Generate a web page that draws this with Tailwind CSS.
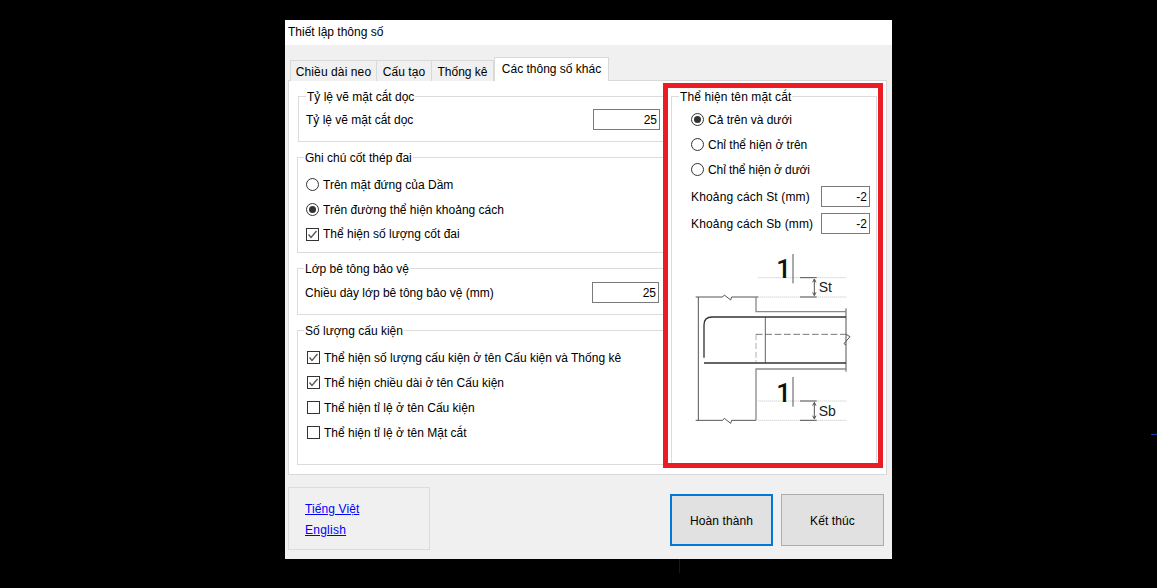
<!DOCTYPE html>
<html lang="vi">
<head>
<meta charset="utf-8">
<title>Thiết lập thông số</title>
<script src="https://cdn.jsdelivr.net/npm/@tailwindcss/browser@4"></script>
</head>
<body class="bg-black">
<div class="relative h-[588px] w-[1157px] overflow-hidden pt-[20px] pl-[285px] font-['Liberation_Sans',Arial,sans-serif] text-[12px] text-black">
  <div class="absolute left-[1151px] top-[434px] h-px w-[6px] bg-[#1a3fb0]"></div>
  <div class="absolute left-[679px] top-[559px] h-[14px] w-px bg-[#3a0a12]"></div>

  <div class="flex h-[539px] w-[607px] flex-col bg-[#f0f0f0]">
    <div class="flex h-[25px] items-center bg-white pl-[3px] pb-[2px]">Thiết lập thông số</div>

    <div class="relative z-10 -mb-px flex h-[36px] items-end pl-[5px]">
      <div class="flex h-[21px] w-[87px] items-center justify-center border border-b-0 border-[#d9d9d9] bg-[#f0f0f0] pt-[1px] tracking-[0.1px]">Chiều dài neo</div>
      <div class="flex h-[21px] w-[55px] items-center justify-center border border-b-0 border-l-0 border-[#d9d9d9] bg-[#f0f0f0] pt-[1px] tracking-[0.1px]">Cấu tạo</div>
      <div class="flex h-[21px] w-[62px] items-center justify-center border border-b-0 border-l-0 border-[#d9d9d9] bg-[#f0f0f0] pt-[1px]">Thống kê</div>
      <div class="flex h-[24px] w-[115px] items-center justify-center border border-b-0 border-[#d9d9d9] bg-white pb-[2px]">Các thông số khác</div>
    </div>

    <div class="relative ml-[3px] flex h-[395px] w-[599px] border border-[#d9d9d9] bg-white pl-[8px] pt-[15px]">
      <div class="flex w-[368px] flex-col gap-[15px]">
        <div class="relative ml-px h-[46px] border border-[#dcdcdc] pl-[7px] pr-[4px] pt-[12px]">
          <span class="absolute -top-[7px] left-[7px] bg-white px-px leading-[14px]">Tỷ lệ vẽ mặt cắt dọc</span>
          <div class="flex items-center justify-between">
            <span>Tỷ lệ vẽ mặt cắt dọc</span>
            <div class="flex h-[21px] w-[67px] items-center justify-end border border-[#7a7a7a] pr-[2px]">25</div>
          </div>
        </div>

        <div class="relative h-[96px] border border-[#dcdcdc] pl-[8px] pt-[14px]">
          <span class="absolute -top-[7px] left-[6px] bg-white px-px leading-[14px]">Ghi chú cốt thép đai</span>
          <div class="flex h-[25px] items-center gap-[4px]">
            <svg class="h-[13px] w-[13px] shrink-0" viewBox="0 0 13 13"><circle cx="6.5" cy="6.5" r="6" fill="#fff" stroke="#333"/></svg>
            <span>Trên mặt đứng của Dầm</span>
          </div>
          <div class="flex h-[25px] items-center gap-[4px]">
            <svg class="h-[13px] w-[13px] shrink-0" viewBox="0 0 13 13"><circle cx="6.5" cy="6.5" r="6" fill="#fff" stroke="#333"/><circle cx="6.5" cy="6.5" r="3.5" fill="#333"/></svg>
            <span>Trên đường thể hiện khoảng cách</span>
          </div>
          <div class="flex h-[24px] items-center gap-[4px]">
            <svg class="h-[13px] w-[13px] shrink-0" viewBox="0 0 13 13"><rect x=".5" y=".5" width="12" height="12" fill="#fff" stroke="#333"/><path d="M2.5 6.5 5 9.5 10.5 3" fill="none" stroke="#555" stroke-width="1.3"/></svg>
            <span>Thể hiện số lượng cốt đai</span>
          </div>
        </div>

        <div class="relative h-[47px] border border-[#dcdcdc] pl-[7px] pr-[5px] pt-[13px]">
          <span class="absolute -top-[7px] left-[6px] bg-white px-px leading-[14px]">Lớp bê tông bảo vệ</span>
          <div class="flex items-center justify-between">
            <span>Chiều dày lớp bê tông bảo vệ (mm)</span>
            <div class="flex h-[21px] w-[67px] items-center justify-end border border-[#7a7a7a] pr-[2px]">25</div>
          </div>
        </div>

        <div class="relative h-[135px] border border-[#dcdcdc] pl-[9px] pt-[14px]">
          <span class="absolute -top-[7px] left-[6px] bg-white px-px leading-[14px]">Số lượng cấu kiện</span>
          <div class="flex h-[25px] items-center gap-[4px]">
            <svg class="h-[13px] w-[13px] shrink-0" viewBox="0 0 13 13"><rect x=".5" y=".5" width="12" height="12" fill="#fff" stroke="#333"/><path d="M2.5 6.5 5 9.5 10.5 3" fill="none" stroke="#555" stroke-width="1.3"/></svg>
            <span>Thể hiện số lượng cấu kiện ở tên Cấu kiện và Thống kê</span>
          </div>
          <div class="flex h-[25px] items-center gap-[4px]">
            <svg class="h-[13px] w-[13px] shrink-0" viewBox="0 0 13 13"><rect x=".5" y=".5" width="12" height="12" fill="#fff" stroke="#333"/><path d="M2.5 6.5 5 9.5 10.5 3" fill="none" stroke="#555" stroke-width="1.3"/></svg>
            <span>Thể hiện chiều dài ở tên Cấu kiện</span>
          </div>
          <div class="flex h-[25px] items-center gap-[4px]">
            <svg class="h-[13px] w-[13px] shrink-0" viewBox="0 0 13 13"><rect x=".5" y=".5" width="12" height="12" fill="#fff" stroke="#333"/></svg>
            <span>Thể hiện tỉ lệ ở tên Cấu kiện</span>
          </div>
          <div class="flex h-[25px] items-center gap-[4px]">
            <svg class="h-[13px] w-[13px] shrink-0" viewBox="0 0 13 13"><rect x=".5" y=".5" width="12" height="12" fill="#fff" stroke="#333"/></svg>
            <span>Thể hiện tỉ lệ ở tên Mặt cắt</span>
          </div>
        </div>
      </div>

      <div class="relative ml-[6px] h-[369px] w-[206px] border border-[#dcdcdc] pt-[10px]">
        <span class="absolute -top-[7px] left-[7px] bg-white px-px leading-[14px] tracking-[0.1px]">Thể hiện tên mặt cắt</span>
        <div class="flex h-[25px] items-center gap-[4px] pl-[19px]">
          <svg class="h-[13px] w-[13px] shrink-0" viewBox="0 0 13 13"><circle cx="6.5" cy="6.5" r="6" fill="#fff" stroke="#333"/><circle cx="6.5" cy="6.5" r="3.5" fill="#333"/></svg>
          <span>Cả trên và dưới</span>
        </div>
        <div class="flex h-[25px] items-center gap-[4px] pl-[19px]">
          <svg class="h-[13px] w-[13px] shrink-0" viewBox="0 0 13 13"><circle cx="6.5" cy="6.5" r="6" fill="#fff" stroke="#333"/></svg>
          <span>Chỉ thể hiện ở trên</span>
        </div>
        <div class="flex h-[25px] items-center gap-[4px] pl-[19px]">
          <svg class="h-[13px] w-[13px] shrink-0" viewBox="0 0 13 13"><circle cx="6.5" cy="6.5" r="6" fill="#fff" stroke="#333"/></svg>
          <span class="tracking-[-0.1px]">Chỉ thể hiện ở dưới</span>
        </div>
        <div class="mt-[4px] flex items-center justify-between pl-[19px] pr-[6px]">
          <span class="tracking-[0.15px]">Khoảng cách St (mm)</span>
          <div class="flex h-[21px] w-[49px] items-center justify-end border border-[#7a7a7a] pr-[2px]">-2</div>
        </div>
        <div class="mt-[6px] flex items-center justify-between pl-[19px] pr-[6px]">
          <span class="tracking-[0.15px]">Khoảng cách Sb (mm)</span>
          <div class="flex h-[21px] w-[49px] items-center justify-end border border-[#7a7a7a] pr-[2px]">-2</div>
        </div>
        <svg class="ml-[8px] mt-[11px] block h-[190px] w-[190px]" viewBox="0 0 570 570" fill="none">
          <g stroke="#b5b5b5" stroke-width="2.5" stroke-dasharray="3 3">
            <path d="M235 98H500M235 156H500M235 468H500M235 526H500"/>
          </g>
          <g stroke="#555" stroke-width="3">
            <path d="M360 98H410M360 156H410M360 468H410M360 526H410"/>
            <path d="M47 156H128L133 150 152 165 155 156H235"/>
            <path d="M47 526H128L133 520 152 535 155 526H228"/>
            <path d="M55 156V526"/>
            <path d="M498 190V380"/>
            <path d="M498 268 510 275 492 296 498 300"/>
            <path d="M403 104V150M403 474V520"/>
            <path d="M398 112 403 102 408 112M398 142 403 152 408 142M398 482 403 472 408 482M398 512 403 522 408 512"/>
          </g>
          <g stroke="#8a8a8a" stroke-width="4">
            <path d="M228 156V200H498"/>
            <path d="M228 526V372H498"/>
          </g>
          <path d="M228 268V352" stroke="#c4c4c4" stroke-width="4" stroke-dasharray="18 8"/>
          <path d="M228 268H498" stroke="#777" stroke-width="3" stroke-dasharray="20 8"/>
          <path d="M72 338V240Q72 216 96 216H498M72 354H498" stroke="#333" stroke-width="4"/>
          <path d="M256 216V354" stroke="#444" stroke-width="2.5"/>
          <path d="M339 27V115M339 396V485" stroke="#555" stroke-width="3"/>
          <text x="289" y="98" fill="#111" font-family="Roboto" font-size="78" font-weight="500">1</text>
          <text x="289" y="470" fill="#111" font-family="Roboto" font-size="78" font-weight="500">1</text>
          <text x="416" y="141" fill="#222" font-family="Liberation Sans" font-size="42">St</text>
          <text x="416" y="514" fill="#222" font-family="Liberation Sans" font-size="42">Sb</text>
        </svg>
      </div>

      <div class="pointer-events-none absolute left-[374px] top-[2px] h-[385px] w-[220px] border-[5px] border-[#ed1c24]"></div>
    </div>

    <div class="mt-[12px] flex items-start justify-between pl-[3px] pr-[8px]">
      <div class="h-[63px] w-[142px] border border-[#dcdcdc] pl-[16px] pt-[10px]">
        <div class="flex h-[21px] items-center"><a href="#" class="text-[#0000ff] underline tracking-[0.1px]">Tiếng Việt</a></div>
        <div class="flex h-[21px] items-center"><a href="#" class="text-[#0000ff] underline tracking-[0.25px]">English</a></div>
      </div>
      <div class="mt-[7px] flex gap-[8px]">
        <div class="flex h-[52px] w-[103px] items-center justify-center border-2 border-[#0078d7] bg-[#e1e1e1] pt-[2px] tracking-[0.1px]">Hoàn thành</div>
        <div class="flex h-[52px] w-[103px] items-center justify-center border border-[#adadad] bg-[#e1e1e1] pt-[2px] tracking-[0.1px]">Kết thúc</div>
      </div>
    </div>
  </div>
</div>
</body>
</html>
